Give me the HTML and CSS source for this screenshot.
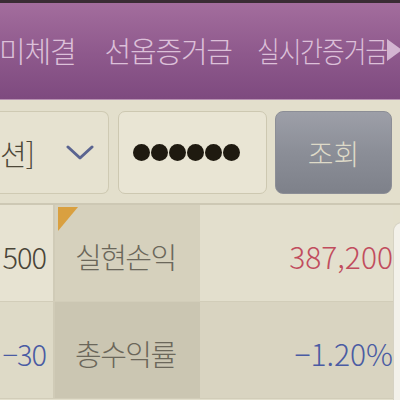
FILE: index.html
```html
<!DOCTYPE html>
<html lang="ko">
<head>
    <meta charset="UTF-8">
    <meta name="viewport" content="width=device-width, initial-scale=1.0">
    <title>잔고조회</title>
    <link rel="stylesheet" href="styles.css">
</head>
<body>
    <div class="screen">
        <div class="tabs">
            <span class="tab">미체결</span>
            <span class="tab">선옵증거금</span>
            <span class="tab tab-narrow">실시간증거금</span>
            <span class="tab-arrow"></span>
        </div>

        <div class="search">
            <div class="select">
                <span class="select-text">션]</span>
                <svg class="chevron" width="28" height="16" viewBox="0 0 28 16">
                    <path d="M2 2 L14 13 L26 2" fill="none" stroke="#5a6490" stroke-width="3" stroke-linecap="round" stroke-linejoin="round"/>
                </svg>
            </div>
            <div class="password">
                <span class="dot"></span><span class="dot"></span><span class="dot"></span>
                <span class="dot"></span><span class="dot"></span><span class="dot"></span>
            </div>
            <button class="search-btn">조회</button>
        </div>

        <div class="table">
            <div class="row">
                <div class="cell num">500</div>
                <div class="cell label marked">실현손익</div>
                <div class="cell value up">387,200</div>
            </div>
            <div class="row alt">
                <div class="cell num down">−30</div>
                <div class="cell label">총수익률</div>
                <div class="cell value down">−1.20%</div>
            </div>
        </div>

        <div class="side-panel"></div>
    </div>
</body>
</html>
```

FILE: styles.css
```css
* {
    margin: 0;
    padding: 0;
    box-sizing: border-box;
}

body {
    font-family: "Noto Sans CJK KR", "Noto Sans", sans-serif;
    font-weight: 300;
    background: #e3dfcc;
    width: 400px;
    height: 400px;
    overflow: hidden;
}

.screen {
    position: relative;
    width: 400px;
    height: 400px;
    overflow: hidden;
}

/* 상단 탭 */
.tabs {
    height: 100px;
    border-top: 3px solid #3a2c34;
    border-bottom: 1px solid #b892b2;
    background: linear-gradient(180deg, #a36d9d 0%, #8f5a8d 50%, #7e4a7f 100%);
    display: flex;
    align-items: center;
    gap: 29px;
    padding-bottom: 3px;
    white-space: nowrap;
}

.tab {
    color: #dcc0d9;
    font-size: 29px;
    letter-spacing: -1.2px;
    flex-shrink: 0;
}

.tab:first-child {
    margin-left: -1px;
}

/* 마지막 탭은 좁게 눌러 씀 */
.tab-narrow {
    display: inline-block;
    margin-left: -4px;
    transform: scaleX(0.85);
    transform-origin: left center;
    margin-right: -22px;
}

.tab-arrow {
    flex-shrink: 0;
    margin-left: -30px;
    width: 0;
    height: 0;
    border-top: 11px solid transparent;
    border-bottom: 11px solid transparent;
    border-left: 15px solid #d3b5d1;
}

/* 조회 영역 */
.search {
    height: 103px;
    display: flex;
    align-items: flex-start;
    gap: 8px;
    padding-top: 11px;
}

.select {
    flex-shrink: 0;
    width: 109px;
    height: 83px;
    border: 1px solid #cfcab3;
    border-left: none;
    border-radius: 0 7px 7px 0;
    background: #e6e2d0;
    display: flex;
    align-items: center;
    justify-content: space-between;
    padding-right: 14px;
    white-space: nowrap;
}

.select-text {
    color: #4d4838;
    font-size: 29px;
    letter-spacing: -1px;
}

.chevron {
    flex-shrink: 0;
}

.password {
    flex-shrink: 0;
    margin-left: 1px;
    width: 149px;
    height: 83px;
    border: 1px solid #cdc8b1;
    border-radius: 7px;
    background: #e9e5d4;
    display: flex;
    align-items: center;
    gap: 1px;
    padding-left: 14px;
}

.dot {
    width: 17px;
    height: 17px;
    border-radius: 50%;
    background: #1f1a10;
}

.search-btn {
    flex-shrink: 0;
    width: 117px;
    height: 83px;
    border: 1px solid #8c8e96;
    border-radius: 8px;
    background: linear-gradient(180deg, #9d9fa8 0%, #8b8e97 50%, #7e818a 100%);
    color: #dedac8;
    font-family: inherit;
    font-weight: 300;
    font-size: 28px;
}

/* 잔고 표 */
.table {
    border-top: 2px solid #cdc8b4;
}

.row {
    display: flex;
    height: 97px;
    border-bottom: 1px solid #d2cdb9;
}

.cell {
    display: flex;
    align-items: center;
    font-size: 29px;
    white-space: nowrap;
    padding-top: 6px;
}

.num {
    width: 55px;
    flex-shrink: 0;
    justify-content: flex-end;
    padding-right: 7px;
    background: #e7e3d2;
    border-right: 2px solid #d0cbb7;
    color: #4a4538;
    letter-spacing: -1px;
}

.label {
    position: relative;
    width: 145px;
    flex-shrink: 0;
    padding-left: 20px;
    background: #d6d1bd;
    color: #6b675a;
    letter-spacing: -1.5px;
}

.marked::before {
    content: "";
    position: absolute;
    top: 2px;
    left: 3px;
    border-top: 24px solid #d9a040;
    border-right: 20px solid transparent;
}

.value {
    width: 193px;
    flex-shrink: 0;
    justify-content: flex-end;
    background: #e3dfcd;
    font-size: 30px;
}

.row.alt .num {
    background: #dedac7;
}

.row.alt .label {
    background: #cbc6b2;
}

.row.alt .value {
    background: #d9d4c1;
}

.up {
    color: #c14c5d;
}

.down {
    color: #4a5ba3;
}

/* 오른쪽 겹친 패널 */
.side-panel {
    position: absolute;
    left: 393px;
    top: 222px;
    width: 20px;
    height: 200px;
    background: #f3f1ea;
    border-left: 1px solid #d6d2c3;
    border-top: 1px solid #d6d2c3;
    border-top-left-radius: 9px;
}
```
